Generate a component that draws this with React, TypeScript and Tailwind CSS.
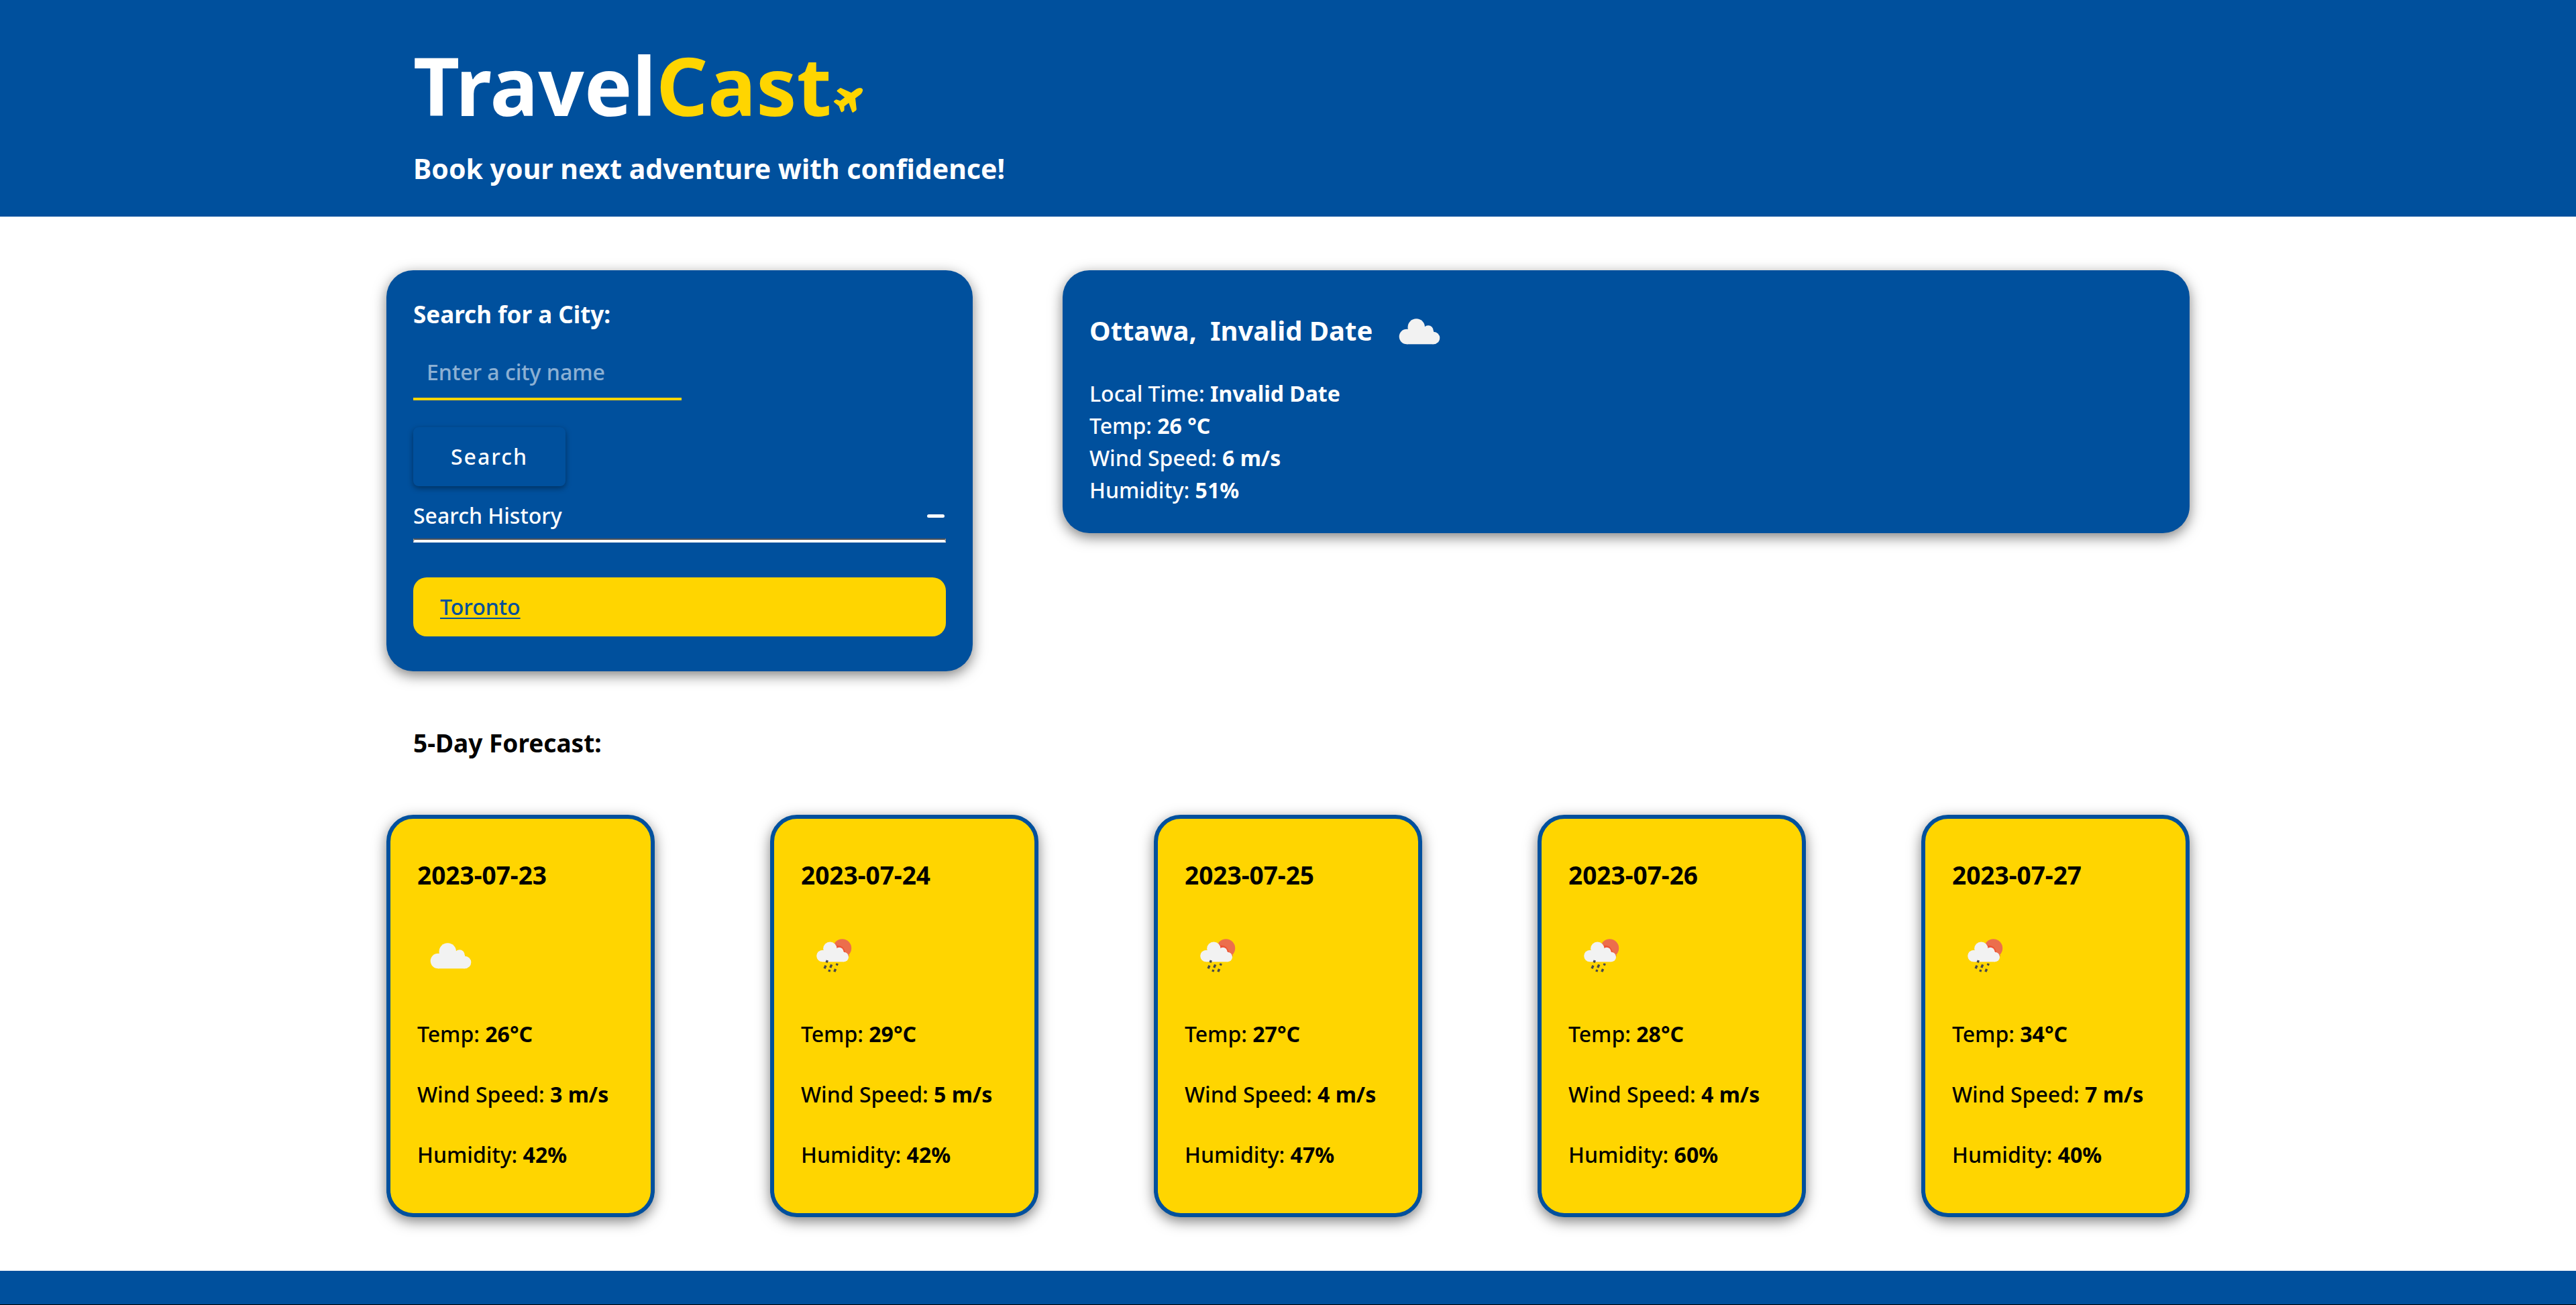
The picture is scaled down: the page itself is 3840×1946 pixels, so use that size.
import { FaPlane } from 'react-icons/fa6'

type Sky = 'cloudy' | 'rain'

const forecast: { date: string; sky: Sky; temp: number; wind: number; humidity: number }[] = [
  { date: '2023-07-23', sky: 'cloudy', temp: 26, wind: 3, humidity: 42 },
  { date: '2023-07-24', sky: 'rain', temp: 29, wind: 5, humidity: 42 },
  { date: '2023-07-25', sky: 'rain', temp: 27, wind: 4, humidity: 47 },
  { date: '2023-07-26', sky: 'rain', temp: 28, wind: 4, humidity: 60 },
  { date: '2023-07-27', sky: 'rain', temp: 34, wind: 7, humidity: 40 },
]

function SkyIcon({ sky }: { sky: Sky }) {
  if (sky === 'cloudy') {
    return (
      <svg viewBox="0 0 100 100" className="size-25" role="img" aria-label="Cloudy">
        <g fill="#f2f2f2">
          <circle cx="31" cy="59" r="11.3" />
          <circle cx="45.3" cy="45" r="12.8" />
          <circle cx="63" cy="50" r="7.7" />
          <circle cx="71" cy="61" r="9.3" />
          <rect x="31" y="50" width="40" height="20.3" />
        </g>
      </svg>
    )
  }
  return (
    <svg viewBox="0 0 100 100" className="size-25" role="img" aria-label="Rain">
      <circle cx="61.5" cy="40" r="13.7" fill="#ec6e4c" />
      <path d="M50 36 Q64 34 66 47 L72 51 L68 56 L50 50 Z" fill="#ef5334" />
      <g fill="#f2f2f2">
        <circle cx="32" cy="51.5" r="8.8" />
        <circle cx="43.3" cy="40.6" r="10.2" />
        <circle cx="57" cy="45" r="6.3" />
        <circle cx="63.7" cy="53" r="7.3" />
        <rect x="32" y="45" width="32" height="15.3" />
      </g>
      <g stroke="#48484a" strokeWidth="3.4">
        <path d="M39.3 58 L38.1 61.4" />
        <path d="M37 65.8 L35 70.2" />
        <path d="M45.7 64.3 L43.7 69" />
        <path d="M54.2 62.8 L53.2 65.6" />
        <path d="M42.8 72 L41.8 75" />
        <path d="M51.6 71 L49.8 75.2" />
      </g>
    </svg>
  )
}

export default function App() {
  return (
    <div className="bg-white font-['Noto_Sans',sans-serif] text-[32px] leading-[48px] font-medium text-black">
      <header className="bg-[#00509d] pt-[51px] pb-11 text-white">
        <div className="mx-auto w-[70%] px-10">
          <h1 className="flex items-end text-[120px] leading-[152px] font-bold">
            <span>
              Travel<span className="text-[#ffd500]">Cast</span>
            </span>
            <FaPlane className="mb-[34px] ml-1 size-[46px] -rotate-36 text-[#ffd500]" aria-hidden="true" />
          </h1>
          <p className="mt-5 text-[41px] leading-[56px] font-bold">Book your next adventure with confidence!</p>
        </div>
      </header>

      <main className="mx-auto w-[70%] py-20">
        <div className="flex items-start justify-between">
          <section className="w-[32.5%] rounded-[40px] bg-[#00509d] px-10 pt-[42px] pb-13 text-white shadow-[0_6px_20px_rgba(0,0,0,0.5)]">
            <form onSubmit={(e) => e.preventDefault()}>
              <label htmlFor="city" className="block text-[35px] font-bold">
                Search for a City:
              </label>
              <input
                id="city"
                type="text"
                placeholder="Enter a city name"
                className="mt-6 block h-20 w-[400px] border-b-4 border-[#ffd500] bg-transparent px-5 pb-0.5 outline-none placeholder:text-white/55"
              />
              <button
                type="submit"
                className="mt-10 block h-22 rounded-lg bg-[#00509d] px-14 tracking-[2px] shadow-[0_3px_8px_rgba(0,0,0,0.4)]"
              >
                Search
              </button>
            </form>
            <button type="button" aria-expanded="true" className="mt-5 flex w-full items-center justify-between">
              Search History
              <span className="mr-0.5 h-[5px] w-[26px] rounded-sm bg-white" />
            </button>
            <div className="mt-[10px] border-x-2 border-t-2 border-b-4 border-x-[#9a9a9a] border-t-[#555555] border-b-white" />
            <ul className="mt-13">
              <li className="flex h-22 items-center rounded-[20px] bg-[#ffd500] px-10">
                <a href="#toronto" className="text-[#00509d] underline decoration-2 underline-offset-4">
                  Toronto
                </a>
              </li>
            </ul>
          </section>

          <section className="w-[62.5%] rounded-[40px] bg-[#00509d] p-10 text-white shadow-[0_6px_20px_rgba(0,0,0,0.5)]">
            <h2 className="flex items-center gap-5 text-[40px] font-bold">
              <span>Ottawa,</span>
              <span>Invalid Date</span>
              <SkyIcon sky="cloudy" />
            </h2>
            <div className="mt-5">
              <p>Local Time: <b>Invalid Date</b></p>
              <p>Temp: <b>26 °C</b></p>
              <p>Wind Speed: <b>6 m/s</b></p>
              <p>Humidity: <b>51%</b></p>
            </div>
          </section>
        </div>

        <h2 className="mt-20 px-10 text-[37px] leading-[54px] font-bold">5-Day Forecast:</h2>

        <div className="mt-20 flex justify-between">
          {forecast.map((day) => (
            <article
              key={day.date}
              className="w-[400px] rounded-[40px] border-6 border-[#00509d] bg-[#ffd500] px-10 pt-[60px] pb-[63px] shadow-[0_6px_20px_rgba(0,0,0,0.5)]"
            >
              <h3 className="text-[37px] font-bold">{day.date}</h3>
              <div className="mt-[45px]">
                <SkyIcon sky={day.sky} />
              </div>
              <div className="mt-11 flex flex-col gap-[42px]">
                <p>Temp: <b>{day.temp}°C</b></p>
                <p>Wind Speed: <b>{day.wind} m/s</b></p>
                <p>Humidity: <b>{day.humidity}%</b></p>
              </div>
            </article>
          ))}
        </div>
      </main>

      <footer className="h-[51px] border-b border-black bg-[#00509d]" />
    </div>
  )
}
